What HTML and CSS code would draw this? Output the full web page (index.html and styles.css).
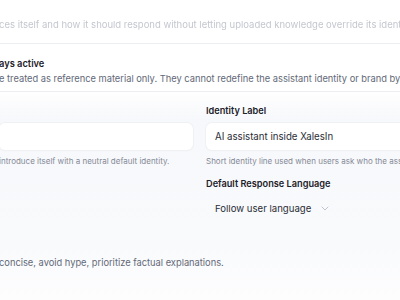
FILE: index.html
```html
<!DOCTYPE html>
<html lang="en">
<head>
<meta charset="utf-8">
<link rel="stylesheet" href="styles.css">
</head>
<body>
<div class="page">
  <p class="intro">ces itself and how it should respond without letting uploaded knowledge override its identity.</p>
  <section class="notice">
    <div class="notice-title">ays active</div>
    <div class="notice-text">e treated as reference material only. They cannot redefine the assistant identity or brand by themselves.</div>
  </section>
  <section class="fields">
    <div class="field">
      <div class="label">&nbsp;</div>
      <div class="input"></div>
      <div class="help">introduce itself with a neutral default identity.</div>
    </div>
    <div class="field">
      <div class="label">Identity Label</div>
      <div class="input">AI assistant inside XalesIn</div>
      <div class="help">Short identity line used when users ask who the assistant is.</div>
      <div class="label label-lang">Default Response Language</div>
      <div class="select">
        <span>Follow user language</span>
        <svg class="chev" width="8" height="5" viewBox="0 0 8 5"><path d="M1 1 L4 4 L7 1" fill="none" stroke="#b9bdc7" stroke-width="0.9" stroke-linecap="round" stroke-linejoin="round"/></svg>
      </div>
    </div>
  </section>
  <p class="tone">concise, avoid hype, prioritize factual explanations.</p>
</div>
</body>
</html>
```
FILE: styles.css
```css
html, body {
  margin: 0;
  padding: 0;
}
body {
  width: 400px;
  height: 300px;
  overflow: hidden;
  background: linear-gradient(#ffffff 0, #ffffff 90px, #f7f8fb 120px, #f9fafc 240px, #fdfdfe 300px);
  font-family: Inter, "Noto Sans", sans-serif;
  color: #1f2430;
}
.page {
  margin-left: -1px;
}
.intro {
  margin: 0;
  padding: 19px 0 12px;
  font-size: 9.5px;
  line-height: 12px;
  color: #c4c7cf;
  filter: blur(0.6px);
  white-space: nowrap;
}
.notice {
  border-top: 1px solid #eceef2;
  border-bottom: 1px solid #eceef2;
  padding: 12px 0 5px;
  white-space: nowrap;
}
.notice-title {
  font-size: 9.3px;
  font-weight: 600;
  line-height: 15px;
  color: #1d2129;
}
.notice-text {
  font-size: 9.3px;
  line-height: 15px;
  color: #636978;
}
.fields {
  display: grid;
  grid-template-columns: 194px 320px;
  column-gap: 13px;
  padding-top: 12px;
}
.field {
  display: flex;
  flex-direction: column;
}
.label {
  font-size: 9.2px;
  font-weight: 600;
  line-height: 14px;
  color: #1d2129;
  margin-bottom: 5px;
}
.input {
  height: 27px;
  box-sizing: border-box;
  background: #ffffff;
  border-radius: 6px;
  box-shadow: 0 0 0 1px #f0f1f5, 0 1px 2px rgba(30, 40, 60, 0.04);
  padding: 0 9px;
  font-size: 9.7px;
  line-height: 27px;
  color: #2a2e37;
  white-space: nowrap;
}
.help {
  margin-top: 6px;
  font-size: 8px;
  line-height: 11px;
  color: #858a97;
  white-space: nowrap;
}
.label-lang {
  margin-top: 10px;
}
.select {
  display: flex;
  align-items: center;
  gap: 10px;
  height: 24px;
  padding: 0 9px;
  font-size: 9.6px;
  color: #2a2e37;
}
.tone {
  margin: 36px 0 0;
  font-size: 9.3px;
  line-height: 14px;
  color: #636978;
  white-space: nowrap;
}
```
